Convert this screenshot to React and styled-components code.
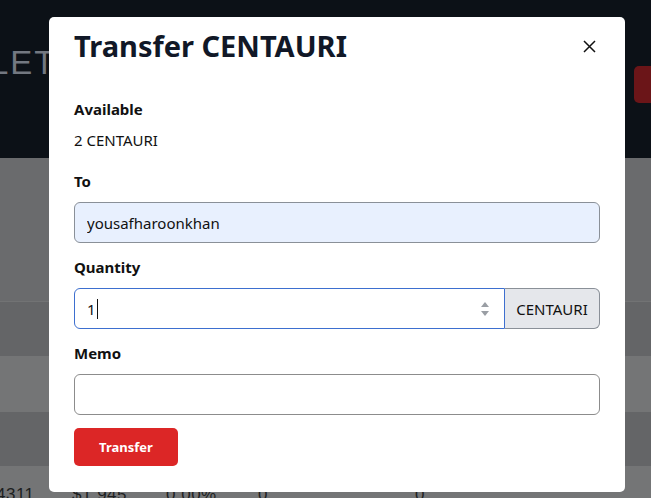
import React from "react";
import styled, { createGlobalStyle } from "styled-components";

const Global = createGlobalStyle`
  html, body { margin: 0; padding: 0; }
  body { font-family: "Noto Sans", "Liberation Sans", sans-serif; background: #6a6b6d; overflow: hidden; }
  * { box-sizing: border-box; }
`;

const Page = styled.div`
  width: 651px;
  height: 498px;
  display: flex;
  flex-direction: column;
  overflow: hidden;
  background: #6a6b6d;
`;

const Header = styled.div`
  height: 158px;
  flex: none;
  background: #0c1117;
  display: flex;
  justify-content: space-between;
  align-items: flex-start;
`;

const HeaderTitle = styled.div`
  margin: 44px 0 0 -10px;
  font-family: "Liberation Sans", sans-serif;
  font-size: 33px;
  font-weight: 300;
  letter-spacing: 2px;
  color: #737881;
`;

const HeaderButton = styled.div`
  margin: 66px -20px 0 0;
  width: 37px;
  height: 37px;
  border-radius: 5px;
  background: #6b1518;
`;

const Spacer = styled.div`
  height: 144px;
  flex: none;
  border-bottom: 1px solid #727374;
`;

const Row = styled.div`
  height: ${(p) => p.h}px;
  flex: none;
  background: ${(p) => (p.light ? "#747576" : "#646567")};
  display: flex;
  align-items: flex-end;
`;

const Cell = styled.span`
  width: ${(p) => p.w}px;
  flex: none;
  font-family: "Liberation Sans", sans-serif;
  font-size: 17px;
  color: #1d1f21;
  line-height: 1;
  margin-bottom: -5px;
  letter-spacing: 0.5px;
`;

const Modal = styled.div`
  position: absolute;
  left: 49px;
  top: 17px;
  width: 576px;
  height: 475px;
  background: #ffffff;
  border-radius: 5px;
  padding: 12px 25px 0 25px;
`;

const ModalHeader = styled.div`
  display: flex;
  justify-content: space-between;
  align-items: center;
  height: 34px;
`;

const Title = styled.h2`
  margin: 0;
  font-size: 29px;
  font-weight: 700;
  color: #111827;
  line-height: 34px;
`;

const Close = styled.button`
  border: none;
  background: none;
  padding: 0;
  margin-right: 3px;
  width: 16px;
  height: 16px;
  display: flex;
  align-items: center;
  justify-content: center;
`;

const Body = styled.div`
  margin-top: 35px;
  display: flex;
  flex-direction: column;
`;

const Label = styled.div`
  font-size: 15px;
  font-weight: 700;
  color: #111111;
  line-height: 22px;
`;

const Value = styled.div`
  font-size: 15px;
  color: #111111;
  line-height: 22px;
  margin-top: 9px;
  margin-bottom: 19px;
`;

const Field = styled.div`
  display: flex;
  flex-direction: column;
  gap: 10px;
  margin-bottom: 13px;
`;

const Input = styled.input`
  height: 41px;
  width: 100%;
  border: 1px solid ${(p) => (p.filled ? "#8a9098" : "#8c8c8c")};
  border-radius: 6px;
  background: ${(p) => (p.filled ? "#e8f0fe" : "#ffffff")};
  padding: 0 12px;
  font-family: inherit;
  font-size: 15px;
  color: #111111;
  outline: none;
`;

const Group = styled.div`
  display: flex;
  height: 41px;
`;

const NumberBox = styled.div`
  flex: 1;
  border: 1px solid #3d6fcf;
  border-radius: 6px 0 0 6px;
  display: flex;
  align-items: center;
  padding: 0 14px 0 12px;
  font-size: 15px;
  color: #111111;
`;

const Caret = styled.span`
  width: 1px;
  height: 20px;
  background: #111111;
  margin-left: 1px;
`;

const Grow = styled.span`
  flex: 1;
`;

const Addon = styled.div`
  width: 95px;
  border: 1px solid #8a9098;
  border-left: none;
  border-radius: 0 6px 6px 0;
  background: #e5e7eb;
  display: flex;
  align-items: center;
  justify-content: center;
  font-size: 15px;
  color: #111111;
`;

const SubmitButton = styled.button`
  width: 104px;
  height: 38px;
  border: none;
  border-radius: 5px;
  background: #dc2626;
  color: #ffffff;
  font-family: inherit;
  font-size: 13px;
  font-weight: 700;
`;

export default function App() {
  return (
    <>
      <Global />
      <Page>
        <Header>
          <HeaderTitle>LET</HeaderTitle>
          <HeaderButton />
        </Header>
        <Spacer />
        <Row h={54} />
        <Row h={56} light />
        <Row h={54} />
        <Row h={32} light>
          <Cell w={76} style={{ marginLeft: -4 }}>4311</Cell>
          <Cell w={94}>$1,945</Cell>
          <Cell w={92}>0.00%</Cell>
          <Cell w={157}>0</Cell>
          <Cell w={40}>0</Cell>
        </Row>
      </Page>
      <Modal>
        <ModalHeader>
          <Title>Transfer CENTAURI</Title>
          <Close aria-label="Close">
            <svg width="13" height="13" viewBox="0 0 13 13">
              <path d="M1 1L12 12M12 1L1 12" stroke="#111" strokeWidth="1.5" />
            </svg>
          </Close>
        </ModalHeader>
        <Body>
          <Label>Available</Label>
          <Value>2 CENTAURI</Value>
          <Field>
            <Label>To</Label>
            <Input filled readOnly value="yousafharoonkhan" />
          </Field>
          <Field>
            <Label>Quantity</Label>
            <Group>
              <NumberBox>
                1<Caret />
                <Grow />
                <svg width="10" height="18" viewBox="0 0 10 18">
                  <path d="M1 7L5 2L9 7Z" fill="#9a9ea4" />
                  <path d="M1 11L5 16L9 11Z" fill="#9a9ea4" />
                </svg>
              </NumberBox>
              <Addon>CENTAURI</Addon>
            </Group>
          </Field>
          <Field>
            <Label>Memo</Label>
            <Input readOnly value="" />
          </Field>
          <div>
            <SubmitButton>Transfer</SubmitButton>
          </div>
        </Body>
      </Modal>
    </>
  );
}
